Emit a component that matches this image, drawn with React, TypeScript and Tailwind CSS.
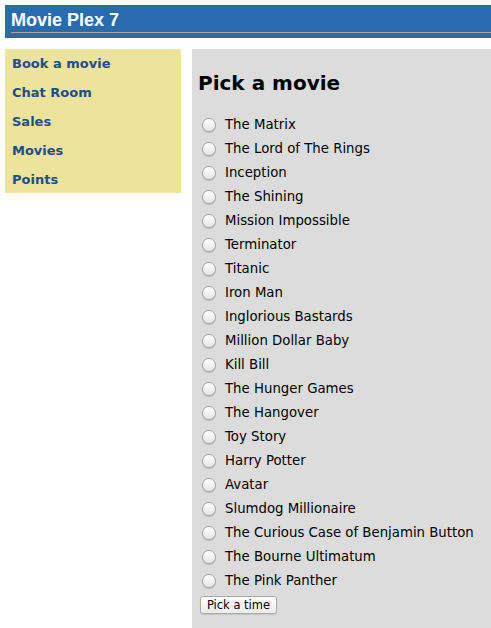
import React, { useState } from 'react';

const movies = [
  'The Matrix',
  'The Lord of The Rings',
  'Inception',
  'The Shining',
  'Mission Impossible',
  'Terminator',
  'Titanic',
  'Iron Man',
  'Inglorious Bastards',
  'Million Dollar Baby',
  'Kill Bill',
  'The Hunger Games',
  'The Hangover',
  'Toy Story',
  'Harry Potter',
  'Avatar',
  'Slumdog Millionaire',
  'The Curious Case of Benjamin Button',
  'The Bourne Ultimatum',
  'The Pink Panther',
];

const navLinks = ['Book a movie', 'Chat Room', 'Sales', 'Movies', 'Points'];

const Radio: React.FC<{ checked: boolean }> = ({ checked }) => (
  <span className="ml-[4px] flex h-[14px] w-[14px] shrink-0 items-center justify-center rounded-full border border-[#a4a4a4] bg-gradient-to-b from-[#ffffff] to-[#e6e6e6] shadow-[0_1px_1px_rgba(0,0,0,0.15)]">
    {checked && <span className="h-[6px] w-[6px] rounded-full bg-[#333]" />}
  </span>
);

const App: React.FC = () => {
  const [selected, setSelected] = useState<number | null>(null);

  return (
    <div className="min-h-screen bg-white font-['DejaVu_Sans',Verdana,sans-serif]">
      {/* header */}
      <div className="ml-[5px] mt-[5px] bg-[#286caf] pb-[5px]">
        <div className="ml-[6px] border-b border-[#a3a3a3] pb-[2px] pt-[5px] font-['Liberation_Sans',Arial,sans-serif] text-[18px] font-bold leading-[20px] text-white">
          Movie Plex 7
        </div>
      </div>

      <div className="mt-[11px] flex gap-[11px] pl-[5px]">
        {/* left nav */}
        <div className="h-[144px] w-[176px] shrink-0 bg-[#ece39c] pl-[7px]">
          {navLinks.map((link) => (
            <a
              key={link}
              href="#"
              className="block text-[13px] font-bold leading-[29px] text-[#1f4d8c]"
            >
              {link}
            </a>
          ))}
        </div>

        {/* main */}
        <div className="flex-1 bg-[#dcdcdc] pb-[16px] pl-[6px] pt-[22px]">
          <h1 className="text-[20px] font-bold leading-[24px] text-black">Pick a movie</h1>
          <div className="mt-[17px] flex flex-col">
            {movies.map((movie, idx) => (
              <label
                key={movie}
                onClick={() => setSelected(idx)}
                className="flex h-[24px] cursor-pointer items-center gap-[9px] text-[13.3px] text-black"
              >
                <span className="mt-[2px]">
                  <Radio checked={selected === idx} />
                </span>
                <span className="mt-[2px]">{movie}</span>
              </label>
            ))}
          </div>
          <button className="ml-[2px] mt-[2px] h-[18px] w-[77px] rounded-[3px] border border-[#a9a9a9] bg-gradient-to-b from-[#ffffff] to-[#ececec] text-[11.5px] leading-[16px] text-black shadow-[0_1px_1px_rgba(0,0,0,0.1)]">
            Pick a time
          </button>
        </div>
      </div>
    </div>
  );
};

export default App;
